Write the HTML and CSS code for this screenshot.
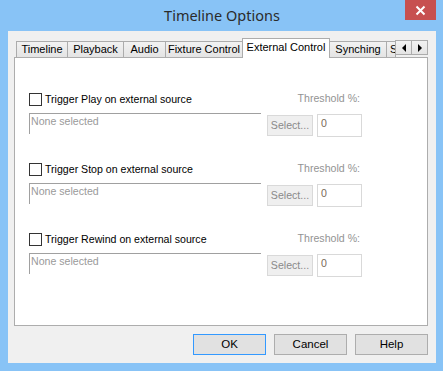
FILE: index.html
```html
<!DOCTYPE html>
<html>

<head>
    <link rel="stylesheet" href="styles.css">
</head>

<body>
    <div class="window">
        <div class="titlebar">
            <span></span>
            <div class="title">Timeline Options</div>
            <div class="close">
                <svg width="11" height="11" viewBox="0 0 11 11">
                    <path d="M1.5 1.5 L9.5 9.5 M9.5 1.5 L1.5 9.5" stroke="#fff" stroke-width="2" />
                </svg>
            </div>
        </div>

        <div class="client">
            <!-- Tab strip -->
            <div class="tabs">
                <div class="tab w-timeline">Timeline</div>
                <div class="tab w-playback">Playback</div>
                <div class="tab w-audio">Audio</div>
                <div class="tab w-fixture">Fixture Control</div>
                <div class="tab active w-external">External Control</div>
                <div class="tab w-synching">Synching</div>
                <div class="tab cut">S</div>
                <div class="spin">
                    <div class="spin-btn"><span class="arrow-left"></span></div>
                    <div class="spin-btn"><span class="arrow-right"></span></div>
                </div>
            </div>

            <div class="panel">
                <div class="group">
                    <div class="group-head">
                        <label class="check"><span class="box"></span>Trigger Play on external source</label>
                        <span class="threshold">Threshold %:</span>
                    </div>
                    <div class="group-body">
                        <div class="source">None selected</div>
                        <div class="select-btn">Select...</div>
                        <div class="edit">0</div>
                    </div>
                </div>
                <div class="group">
                    <div class="group-head">
                        <label class="check"><span class="box"></span>Trigger Stop on external source</label>
                        <span class="threshold">Threshold %:</span>
                    </div>
                    <div class="group-body">
                        <div class="source">None selected</div>
                        <div class="select-btn">Select...</div>
                        <div class="edit">0</div>
                    </div>
                </div>
                <div class="group">
                    <div class="group-head">
                        <label class="check"><span class="box"></span>Trigger Rewind on external source</label>
                        <span class="threshold">Threshold %:</span>
                    </div>
                    <div class="group-body">
                        <div class="source">None selected</div>
                        <div class="select-btn">Select...</div>
                        <div class="edit">0</div>
                    </div>
                </div>
            </div>

            <div class="actions">
                <div class="btn default">OK</div>
                <div class="btn">Cancel</div>
                <div class="btn">Help</div>
            </div>
        </div>
    </div>
</body>

</html>
```

FILE: styles.css
```css
/* Dialog frame */
body {
    margin: 0;
    font-family: 'Liberation Sans', Arial, sans-serif;
    font-size: 10.6px;
    color: #000;
}

.window {
    width: 443px;
    height: 371px;
    box-sizing: border-box;
    background-color: #88c3f6;
    padding: 0 7px 8px 8px;
    display: flex;
    flex-direction: column;
}

.titlebar {
    height: 31px;
    display: grid;
    grid-template-columns: 1fr auto 1fr;
    align-items: start;
}

.title {
    font-family: 'Noto Sans', sans-serif;
    font-size: 14.5px;
    color: #2b2b2b;
    line-height: 30px;
}

.close {
    justify-self: end;
    width: 31px;
    height: 20px;
    background-color: #c75050;
    display: flex;
    align-items: center;
    justify-content: center;
}

.client {
    flex: 1;
    background-color: #f0f0f0;
    padding: 7px 8px 8px 6px;
    display: flex;
    flex-direction: column;
}

/* Tabs */
.tabs {
    height: 19px;
    display: flex;
    align-items: flex-end;
    padding-left: 2px;
    position: relative;
    z-index: 1;
}

.tab {
    box-sizing: border-box;
    height: 16px;
    border: 1px solid #acacac;
    border-bottom: none;
    background: linear-gradient(#f2f2f2, #e4e4e4);
    margin-right: -1px;
    text-align: center;
    line-height: 15px;
    white-space: nowrap;
    font-size: 11px;
}

.w-timeline { width: 52px; }
.w-playback { width: 57px; }
.w-audio { width: 43px; }
.w-fixture { width: 78px; }
.w-synching { width: 58px; }

.tab.active {
    width: 88px;
    height: 20px;
    margin-bottom: -1px;
    background: #fff;
    line-height: 16px;
    position: relative;
    z-index: 2;
}

.tab.cut {
    width: 10px;
    overflow: hidden;
    text-align: left;
    padding-left: 3px;
}

.spin {
    display: flex;
    margin-bottom: 2px;
}

.spin-btn {
    box-sizing: border-box;
    width: 17px;
    height: 15px;
    border: 1px solid #acacac;
    background: linear-gradient(#f2f2f2, #e4e4e4);
    margin-right: -1px;
    display: flex;
    align-items: center;
    justify-content: center;
}

.arrow-left {
    width: 0;
    height: 0;
    border-top: 4px solid transparent;
    border-bottom: 4px solid transparent;
    border-right: 4px solid #000;
}

.arrow-right {
    width: 0;
    height: 0;
    border-top: 4px solid transparent;
    border-bottom: 4px solid transparent;
    border-left: 4px solid #000;
}

/* Tab page */
.panel {
    box-sizing: border-box;
    height: 269px;
    width: 414px;
    border: 1px solid #adadad;
    background-color: #fff;
    padding: 34px 0 0 14px;
}

.group {
    width: 333px;
    height: 70px;
}

.group-head {
    height: 14px;
    display: flex;
    justify-content: space-between;
    align-items: center;
}

.check {
    display: flex;
    align-items: center;
    gap: 3px;
}

.box {
    box-sizing: border-box;
    width: 13px;
    height: 13px;
    border: 1px solid #333;
    background: #fff;
}

.threshold {
    color: #939393;
    margin-right: 2px;
    margin-top: -2px;
}

.group-body {
    margin-top: 7px;
    display: flex;
    align-items: flex-start;
}

.source {
    box-sizing: border-box;
    width: 232px;
    height: 21px;
    border-top: 1px solid #a0a0a0;
    border-left: 1px solid #a0a0a0;
    color: #9a9a9a;
    padding: 1px 0 0 1px;
}

.select-btn {
    box-sizing: border-box;
    width: 46px;
    height: 21px;
    margin: 2px 0 0 6px;
    border: 1px solid #d9d9d9;
    background-color: #efefef;
    color: #8a8a8a;
    text-align: center;
    line-height: 19px;
}

.edit {
    box-sizing: border-box;
    width: 45px;
    height: 23px;
    margin: 1px 0 0 4px;
    border: 1px solid #d9d9d9;
    background-color: #fff;
    color: #7a6a5a;
    padding: 2px 0 0 3px;
}

/* Bottom buttons */
.actions {
    margin-top: 8px;
    display: flex;
    justify-content: flex-end;
    gap: 8px;
}

.btn {
    box-sizing: border-box;
    width: 73px;
    height: 21px;
    border: 1px solid #adadad;
    background-color: #e1e1e1;
    text-align: center;
    line-height: 19px;
    font-size: 11.5px;
}

.btn.default {
    border-color: #3399ff;
}
```
